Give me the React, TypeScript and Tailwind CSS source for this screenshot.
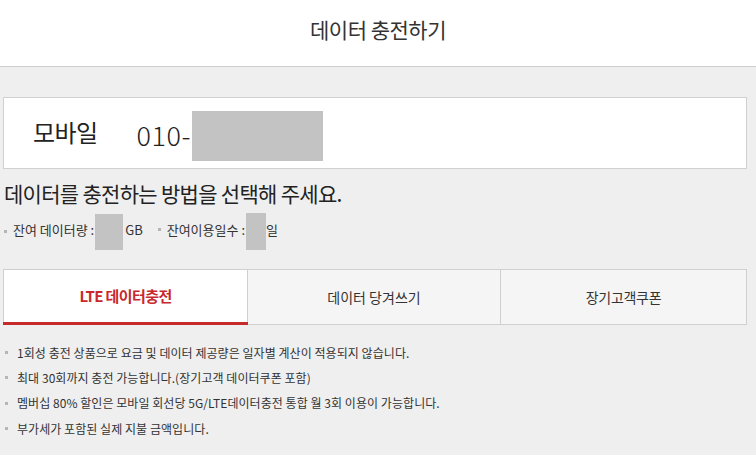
import React from "react";

const font = { fontFamily: '"Noto Sans CJK KR", "Noto Sans", sans-serif' };

export default function App() {
  const notes = [
    "1회성 충전 상품으로 요금 및 데이터 제공량은 일자별 계산이 적용되지 않습니다.",
    "최대 30회까지 충전 가능합니다.(장기고객 데이터쿠폰 포함)",
    "멤버십 80% 할인은 모바일 회선당 5G/LTE데이터충전 통합 월 3회 이용이 가능합니다.",
    "부가세가 포함된 실제 지불 금액입니다.",
  ];
  return (
    <div className="w-[756px] h-[455px] overflow-hidden bg-[#efefef] text-[#333]" style={font}>
      <div className="h-[67px] bg-white border-b border-[#cfcfcf] flex items-center justify-center pb-[8px]">
        <span className="text-[21px] leading-none tracking-[-0.5px] text-[#333]">데이터 충전하기</span>
      </div>
      <div className="pl-[3px] w-[747px]">
        <div className="mt-[30px] h-[72px] bg-white border border-[#d0d0d0] flex items-center">
          <span className="ml-[29px] text-[24px] leading-none tracking-[-0.6px] text-[#222] mt-[-2px]">모바일</span>
          <span className="ml-[39px] text-[27px] leading-none tracking-[0.6px] font-light text-[#222] mt-[2px]">010-</span>
          <div className="w-[131px] h-[50px] bg-[#c3c3c3] ml-[1px] mt-[5px]" />
        </div>
        <div className="mt-[9px] h-[30px] flex items-center">
          <span className="text-[21px] leading-none tracking-[-0.7px] text-[#222] ml-[1px]">데이터를 충전하는 방법을 선택해 주세요.</span>
        </div>
        <div className="mt-[5px] h-[37px] flex items-center text-[13px] leading-none tracking-[0px] text-[#333]">
          <span className="w-[3px] h-[3px] bg-[#b5b5b5] ml-[1px] mr-[6px]" />
          <span className="-mt-[4px]">잔여 데이터량 :</span>
          <div className="w-[28px] h-[36px] bg-[#c3c3c3] ml-[1px]" />
          <span className="ml-[2px] -mt-[4px]">GB</span>
          <span className="w-[3px] h-[3px] bg-[#b5b5b5] ml-[15px] mr-[6px] -mt-[4px]" />
          <span className="-mt-[4px]">잔여이용일수 :</span>
          <div className="w-[20px] h-[37px] bg-[#c3c3c3] ml-[1px]" />
          <span className="-mt-[4px]">일</span>
        </div>
        <div className="mt-[19px] flex h-[56px]">
          <div className="w-[245px] bg-white border border-[#cfcfcf] border-b-0 flex flex-col">
            <div className="flex-1 flex items-center justify-center pt-[1px]">
              <span className="text-[15px] font-bold tracking-[-0.6px] text-[#c8282d]">LTE 데이터충전</span>
            </div>
            <div className="h-[3px] bg-[#c62a2a] -mx-px" />
          </div>
          <div className="w-[253px] bg-[#f5f5f5] border border-l-0 border-[#cfcfcf] flex items-center justify-center">
            <span className="text-[14px] tracking-[0px] text-[#333]">데이터 당겨쓰기</span>
          </div>
          <div className="w-[246px] bg-[#f5f5f5] border border-l-0 border-[#cfcfcf] flex items-center justify-center">
            <span className="text-[14px] tracking-[-0.3px] text-[#333]">장기고객쿠폰</span>
          </div>
        </div>
        <ul className="mt-[15px] flex flex-col">
          {notes.map((n) => (
            <li key={n} className="h-[25.3px] flex items-center text-[12px] leading-none tracking-[0.05px] text-[#333]">
              <span className="w-[3px] h-[3px] bg-[#b5b5b5] ml-[2px] mr-[9px] shrink-0" />
              <span>{n}</span>
            </li>
          ))}
        </ul>
      </div>
    </div>
  );
}
